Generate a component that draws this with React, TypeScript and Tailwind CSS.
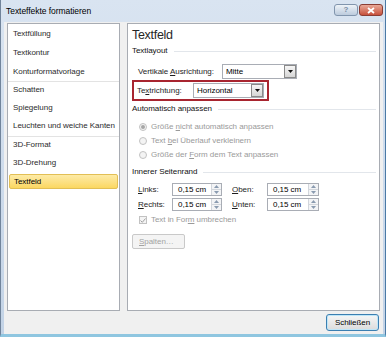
import React from "react";

const ui = "font-['Liberation_Sans',Arial,sans-serif]";

function Select({ value, width }: { value: string; width: string }) {
  return (
    <div className={`${width} h-[15px] flex border border-[#a9adb5] bg-white`}>
      <span className="flex-1 pl-[3px] leading-[13px] text-black">{value}</span>
      <span className="w-[12px] h-[13px] flex items-center justify-center border border-[#8a8a8a] bg-gradient-to-b from-[#f6f6f6] to-[#d6d6d6]">
        <svg width="5" height="3" viewBox="0 0 5 3">
          <path d="M0 0h5L2.5 3z" fill="#111" />
        </svg>
      </span>
    </div>
  );
}

function Spin({ width }: { width: string }) {
  return (
    <div className={`${width} h-[13px] flex border border-[#a9adb5] bg-white`}>
      <span className="flex-1 pl-[5px] leading-[11px] text-black">0,15 cm</span>
      <span className="w-[10px] flex flex-col border-l border-[#d2d6dc] bg-[#f3f4f6]">
        <span className="flex-1 flex items-center justify-center border-b border-[#d2d6dc]">
          <svg width="5" height="3" viewBox="0 0 5 3">
            <path d="M0 3h5L2.5 0z" fill="#8a9bb0" />
          </svg>
        </span>
        <span className="flex-1 flex items-center justify-center">
          <svg width="5" height="3" viewBox="0 0 5 3">
            <path d="M0 0h5L2.5 3z" fill="#8a9bb0" />
          </svg>
        </span>
      </span>
    </div>
  );
}

function GroupHead({ label }: { label: string }) {
  return (
    <div className="h-[12px] flex items-center pl-[4px] pr-[3px]">
      <span className="text-[#111] leading-[12px]">{label}</span>
      <span className="flex-1 h-px ml-[6px] bg-[#e2e6eb]" />
    </div>
  );
}

function Radio({ checked, children }: { checked?: boolean; children: React.ReactNode }) {
  return (
    <div className="h-[14px] flex items-center pl-[11px] text-[#9a9a9a]">
      <span className="w-[8px] h-[8px] rounded-full border border-[#c2c2c2] bg-[#f4f4f4] flex items-center justify-center">
        {checked && <span className="w-[4px] h-[4px] rounded-full bg-[#a6a6a6]" />}
      </span>
      <span className="ml-[4px] leading-[12px]">{children}</span>
    </div>
  );
}

const groups = [
  ["Textfüllung", "Textkontur", "Konturformatvorlage"],
  ["Schatten", "Spiegelung", "Leuchten und weiche Kanten"],
  ["3D-Format", "3D-Drehung", "Textfeld"],
];

export default function App() {
  return (
    <div
      className={`${ui} text-[8px] tracking-[-0.05px] whitespace-nowrap w-[386px] h-[337px] flex flex-col bg-gradient-to-b from-[#d9e4f1] to-[#c3d3e6] border-l border-[#71849b] border-r border-r-[#4b7aa6] border-b-[3px] border-b-[#8fc6e0] text-[#1e1e1e]`}
    >
      {/* title bar */}
      <div className="h-[22px] flex items-center pl-[5px] pr-[2px]">
        <span className="text-[8.5px] text-black">Texteffekte formatieren</span>
        <span className="ml-auto flex gap-[1px] mb-[2px]">
          <span className="w-[24px] h-[12px] rounded-[3px] border border-[#8195ad] bg-gradient-to-b from-[#eef3f8] to-[#bccbdd] flex items-center justify-center text-[8px] font-bold text-[#7a8da5] leading-none">
            ?
          </span>
          <span className="w-[24px] h-[12px] rounded-[3px] border border-[#8a3d34] bg-gradient-to-b from-[#e8a898] to-[#c6503c] flex items-center justify-center">
            <svg width="8" height="7" viewBox="0 0 8 7">
              <path d="M1 1l6 5M7 1L1 6" stroke="#fff" strokeWidth="1.8" />
            </svg>
          </span>
        </span>
      </div>

      {/* dialog body */}
      <div className="flex-1 ml-[3px] mr-[2px] bg-[#f0f0f0] pt-[1px] px-[3px] flex flex-col">
        <div className="h-[288px] flex gap-[7px]">
          {/* category list */}
          <div className="w-[113px] border border-[#a8acb3] bg-white flex flex-col">
            {groups.map((items, gi) => (
              <div key={gi} className={gi < 2 ? "border-b border-[#e3e3e3]" : ""}>
                {items.map((item) =>
                  item === "Textfeld" ? (
                    <div key={item} className="h-[18px] pt-[1px] px-[1px]">
                      <div className="h-[15px] flex items-center pl-[4px] rounded-[2px] border border-[#e2bf55] bg-gradient-to-b from-[#fdeba6] to-[#fbd760] text-black">
                        {item}
                      </div>
                    </div>
                  ) : (
                    <div
                      key={item}
                      className={`${gi === 0 ? "h-[19px]" : "h-[18px] pb-[2px]"} flex items-center pl-[5px] text-[#2b2b2b]`}
                    >
                      {item}
                    </div>
                  )
                )}
              </div>
            ))}
          </div>

          {/* settings page */}
          <div className="flex-1 border border-[#a8acb3] bg-white flex flex-col pt-[3px]">
            <div className="h-[16px] pl-[4px] text-[12.5px] leading-[16px] tracking-[-0.3px] text-[#262626]">
              Textfeld
            </div>
            <div className="mt-[2px]">
              <GroupHead label="Textlayout" />
            </div>

            <div className="mt-[7px] h-[15px] flex items-center pl-[10px]">
              <span className="w-[84px]">
                Vertikale <u>A</u>usrichtung:
              </span>
              <Select value="Mitte" width="w-[75px]" />
            </div>

            <div className="mt-[1px] ml-[4px] w-[137px] h-[21px] border-2 border-[#a82530] flex items-center pl-[3px]">
              <span className="w-[56px]">
                Te<u>x</u>trichtung:
              </span>
              <Select value="Horizontal" width="w-[71px]" />
            </div>

            <div className="mt-[2px]">
              <GroupHead label="Automatisch anpassen" />
            </div>
            <div className="mt-[5px]">
              <Radio checked>
                Größe <u>n</u>icht automatisch anpassen
              </Radio>
              <Radio>
                Text <u>b</u>ei Überlauf verkleinern
              </Radio>
              <Radio>
                Größe der <u>F</u>orm dem Text anpassen
              </Radio>
            </div>

            <div className="mt-[4px]">
              <GroupHead label="Innerer Seitenrand" />
            </div>
            <div className="mt-[5px] h-[13px] flex items-center pl-[10px]">
              <span className="w-[34px]">
                <u>L</u>inks:
              </span>
              <Spin width="w-[50px]" />
              <span className="w-[35px] ml-[10px]">
                <u>O</u>ben:
              </span>
              <Spin width="w-[52px]" />
            </div>
            <div className="mt-[2px] h-[13px] flex items-center pl-[10px]">
              <span className="w-[34px]">
                <u>R</u>echts:
              </span>
              <Spin width="w-[50px]" />
              <span className="w-[35px] ml-[10px]">
                <u>U</u>nten:
              </span>
              <Spin width="w-[52px]" />
            </div>

            <div className="mt-[3px] h-[12px] flex items-center pl-[11px] text-[#9a9a9a]">
              <span className="w-[8px] h-[8px] border border-[#c2c2c2] bg-[#f4f4f4] flex items-center justify-center">
                <svg width="6" height="5" viewBox="0 0 6 5">
                  <path d="M0.5 2.5l1.8 1.8L5.5 0.5" stroke="#a0a0a0" strokeWidth="1" fill="none" />
                </svg>
              </span>
              <span className="ml-[4px]">
                Text in For<u>m</u> umbrechen
              </span>
            </div>

            <div className="mt-[8px] ml-[4px] w-[53px] h-[15px] rounded-[2px] border border-[#c9c9c9] bg-[#f4f4f4] flex items-center pl-[6px] text-[#a3a3a3]">
              <u>S</u>palten…
            </div>
          </div>
        </div>

        <div className="mt-[3px] flex justify-end pr-[1px]">
          <div className="w-[53px] h-[17px] rounded-[3px] border border-[#3c7fb1] bg-gradient-to-b from-[#f6f6f6] to-[#dcdcdc] flex items-center justify-center text-black shadow-[inset_0_0_0_1px_#bfe6f8]">
            Schließen
          </div>
        </div>
      </div>
    </div>
  );
}
